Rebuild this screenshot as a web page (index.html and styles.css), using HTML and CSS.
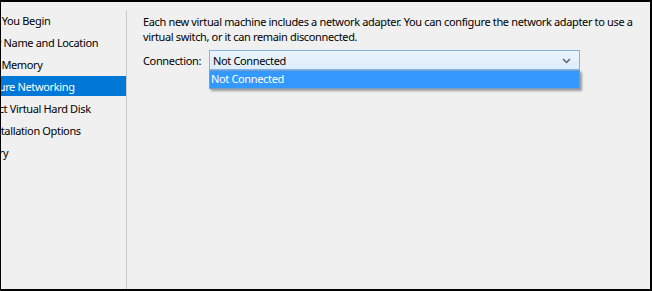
FILE: index.html
```html
<!DOCTYPE html>
<html lang="en">
<head>
    <meta charset="UTF-8">
    <title>New Virtual Machine Wizard</title>
    <link rel="stylesheet" href="styles.css">
</head>
<body>
    <div class="frame">
        <div class="side">
            <ul class="steps">
                <li>Before You Begin</li>
                <li>Specify Name and Location</li>
                <li>Assign Memory</li>
                <li class="on">Configure Networking</li>
                <li>Connect Virtual Hard Disk</li>
                <li class="inst">Installation Options</li>
                <li class="sum">Summary</li>
            </ul>
        </div>
        <div class="sep"></div>
        <div class="main">
            <p class="intro">Each new virtual machine includes a network adapter. You can configure the network adapter to use a<br>virtual switch, or it can remain disconnected.</p>
            <div class="row">
                <span class="label">Connection:</span>
                <div class="combo">
                    <div class="combo-box">
                        <span>Not Connected</span>
                        <svg class="chev" width="9" height="6" viewBox="0 0 9 6"><path d="M1 1 L4.5 4.5 L8 1" fill="none" stroke="#606060" stroke-width="1.5"/></svg>
                    </div>
                    <div class="combo-list">
                        <div class="opt sel">Not Connected</div>
                    </div>
                </div>
            </div>
        </div>
    </div>
</body>
</html>
```

FILE: styles.css
```css
*{
    box-sizing: border-box;
}

body{
    margin: 0;
    background: #000;
    font-family: "Noto Sans", "Open Sans", sans-serif;
    font-size: 11px;
    letter-spacing: -0.35px;
    color: #000;
}

.frame{
    width: 652px;
    height: 291px;
    border-style: solid;
    border-color: #000;
    border-width: 2px 2px 2px 1px;
    background: #f0f0f0;
    display: flex;
}

/* left steps list */
.side{
    width: 125px;
    flex-shrink: 0;
    overflow: hidden;
    padding-top: 8px;
}

.steps{
    list-style: none;
    margin: 0;
    padding: 0;
    display: flex;
    flex-direction: column;
    gap: 2px;
}

.steps li{
    height: 20px;
    line-height: 21px;
    white-space: nowrap;
    text-indent: -36px;
    padding-left: 2px;
}

.steps li.inst{
    text-indent: -17px;
}

.steps li.sum{
    text-indent: -42px;
}

.steps li.on{
    background: #0078d7;
    color: #fff;
}

.sep{
    width: 1px;
    flex-shrink: 0;
    margin-top: 8px;
    background: #c9c9c9;
}

.main{
    flex: 1;
    min-width: 0;
    padding: 12px 0 0 16px;
}

.intro{
    margin: 0;
    line-height: 15px;
    white-space: nowrap;
}

.row{
    display: flex;
    margin-top: 6px;
}

.label{
    width: 66px;
    line-height: 21px;
}

.combo{
    width: 371px;
    position: relative;
}

.combo-box{
    height: 20px;
    border: 1px solid #7eb4ea;
    background: linear-gradient(#ecf4fc, #dcecfc);
    display: flex;
    align-items: center;
    justify-content: space-between;
    padding: 1px 8px 0 3px;
}

.chev{
    display: block;
}

.combo-list{
    position: absolute;
    left: 0;
    top: 20px;
    width: 371px;
    border: 1px solid #7a9bc4;
    background: #fff;
    box-shadow: 2px 2px 2px rgba(0,0,0,0.35);
}

.opt{
    height: 17px;
    line-height: 16px;
    padding-left: 1px;
}

.opt.sel{
    background: #3399ff;
    color: #fff;
}
```
